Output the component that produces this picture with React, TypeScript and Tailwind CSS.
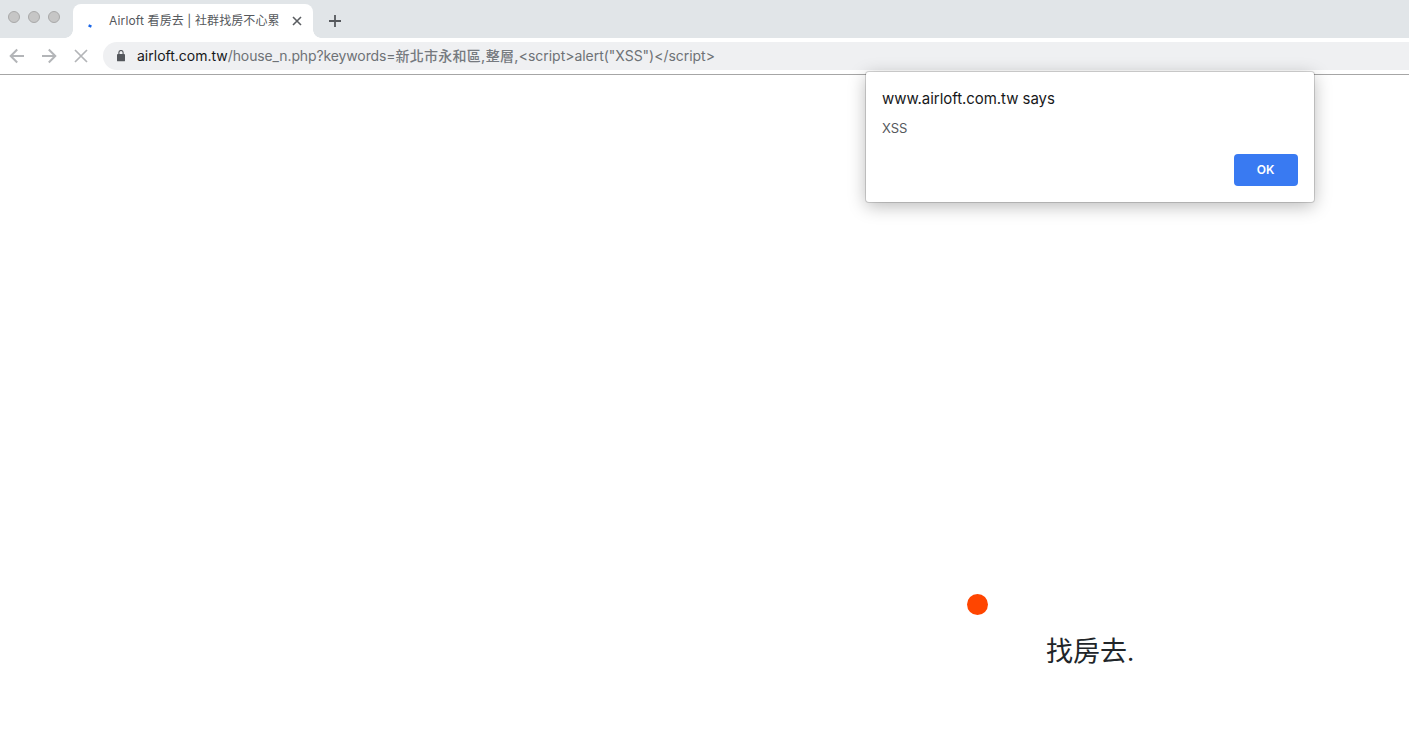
import type { ReactNode } from "react";

interface IconProps {
  className?: string;
  size: number;
  stroke?: number;
  children: ReactNode;
}

function Icon({ className = "", size, stroke = 2, children }: IconProps) {
  return (
    <svg
      className={`block shrink-0 ${className}`}
      width={size}
      height={size}
      viewBox={`0 0 ${size} ${size}`}
      fill="none"
      stroke="currentColor"
      strokeWidth={stroke}
    >
      {children}
    </svg>
  );
}

function TabStrip() {
  return (
    <div className="flex h-[38px] bg-[#e1e5e8]">
      <div className="flex gap-2 pt-[11px] pl-2">
        {[0, 1, 2].map((i) => (
          <span
            key={i}
            className="size-3 rounded-full border border-[#a9a9a9] bg-[#c6c6c6]"
          />
        ))}
      </div>
      <div className="relative mt-1 ml-[13px] flex h-[34px] w-[240px] items-center rounded-t-lg bg-white">
        <span className="absolute bottom-0 -left-2 size-2 bg-[radial-gradient(circle_at_0_0,#e1e5e8_7.5px,#fff_8px)]" />
        <span className="absolute -right-2 bottom-0 size-2 bg-[radial-gradient(circle_at_100%_0,#e1e5e8_7.5px,#fff_8px)]" />
        <Icon size={16} className="ml-3 text-[#1a66e8]" stroke={2.4}>
          <path d="M3.6 12.4 6.4 13.7" />
        </Icon>
        <span className="ml-2 w-[176px] text-[12px] leading-4 whitespace-nowrap text-[#55585c]">
          <span className="tracking-[0.15px]">Airloft </span>
          <span className="tracking-[0.1px]">看房去 | 社群找房不心累</span>
        </span>
        <Icon size={10} className="ml-[7px] text-[#5a5d61]" stroke={1.6}>
          <path d="M1 1l8 8M9 1l-8 8" />
        </Icon>
      </div>
      <Icon size={12} className="mt-[15px] ml-4 text-[#55585c]" stroke={1.8}>
        <path d="M6 0v12M0 6h12" />
      </Icon>
    </div>
  );
}

function Toolbar() {
  return (
    <div className="flex h-[37px] items-start border-b border-[#a6a6a6] bg-white pt-1">
      <div className="flex h-7 items-center gap-4 pl-[9px] text-[#b3b5b8]">
        <Icon size={16}>
          <path d="M15 8H2M8.2 1.5 1.7 8l6.5 6.5" />
        </Icon>
        <Icon size={16}>
          <path d="M1 8h13M7.8 1.5 14.3 8l-6.5 6.5" />
        </Icon>
        <Icon size={16} stroke={1.7}>
          <path d="M2 2l12 12M14 2 2 14" />
        </Icon>
      </div>
      <div className="ml-[14px] flex h-7 flex-1 items-center rounded-l-full bg-[#eff0f2] pl-[14px]">
        <svg
          className="block shrink-0"
          width="8"
          height="12"
          viewBox="0 0 8 12"
          fill="none"
        >
          <rect y="4" width="8" height="7.3" rx="0.9" fill="#54575c" />
          <path
            d="M1.9 4.4V2.6a2.1 2.1 0 0 1 4.2 0v1.8"
            stroke="#54575c"
            strokeWidth="1.1"
          />
        </svg>
        <p className="ml-3 text-[14px] leading-5 whitespace-nowrap text-[#6e7276]">
          <span className="text-[#17181a]">airloft.com.tw</span>
          <span className="tracking-[-0.12px]">/house_n.php?keywords=</span>
          <span className="font-medium tracking-[0.28px] text-[#767a7f]">
            新北市永和區,整層,
          </span>
          <span className="tracking-[-0.03px]">
            {'<script>alert("XSS")</script>'}
          </span>
        </p>
      </div>
    </div>
  );
}

function AlertDialog() {
  return (
    <div
      role="dialog"
      className="absolute top-[72px] left-[866px] flex h-[130px] w-[448px] flex-col rounded-[3px] bg-white px-4 pt-4 pb-4 shadow-[0_0_0_1px_rgba(0,0,0,0.15),0_4px_18px_rgba(0,0,0,0.28)]"
    >
      <h1 className="text-[15px] leading-[22px] tracking-[-0.05px] text-[#17181a]">
        www.airloft.com.tw says
      </h1>
      <p className="mt-2 text-[13px] leading-5 text-[#55585d]">XSS</p>
      <button className="mt-auto h-8 w-16 self-end rounded bg-[#397af2] pr-px text-[12px] font-semibold text-white">
        OK
      </button>
    </div>
  );
}

export default function App() {
  return (
    <div className="relative flex h-[733px] w-[1409px] flex-col overflow-hidden bg-white font-['Inter','Noto_Sans_CJK_TC',sans-serif]">
      <TabStrip />
      <Toolbar />
      <main className="flex flex-1 flex-col pt-[519px]">
        <span className="ml-[967px] size-[21px] rounded-full bg-[#ff4500]" />
        <p className="mt-[17px] ml-[1046px] text-[27px] leading-10 text-[#212529]">
          找房去<span className="text-[25px]">.</span>
        </p>
      </main>
      <AlertDialog />
    </div>
  );
}
